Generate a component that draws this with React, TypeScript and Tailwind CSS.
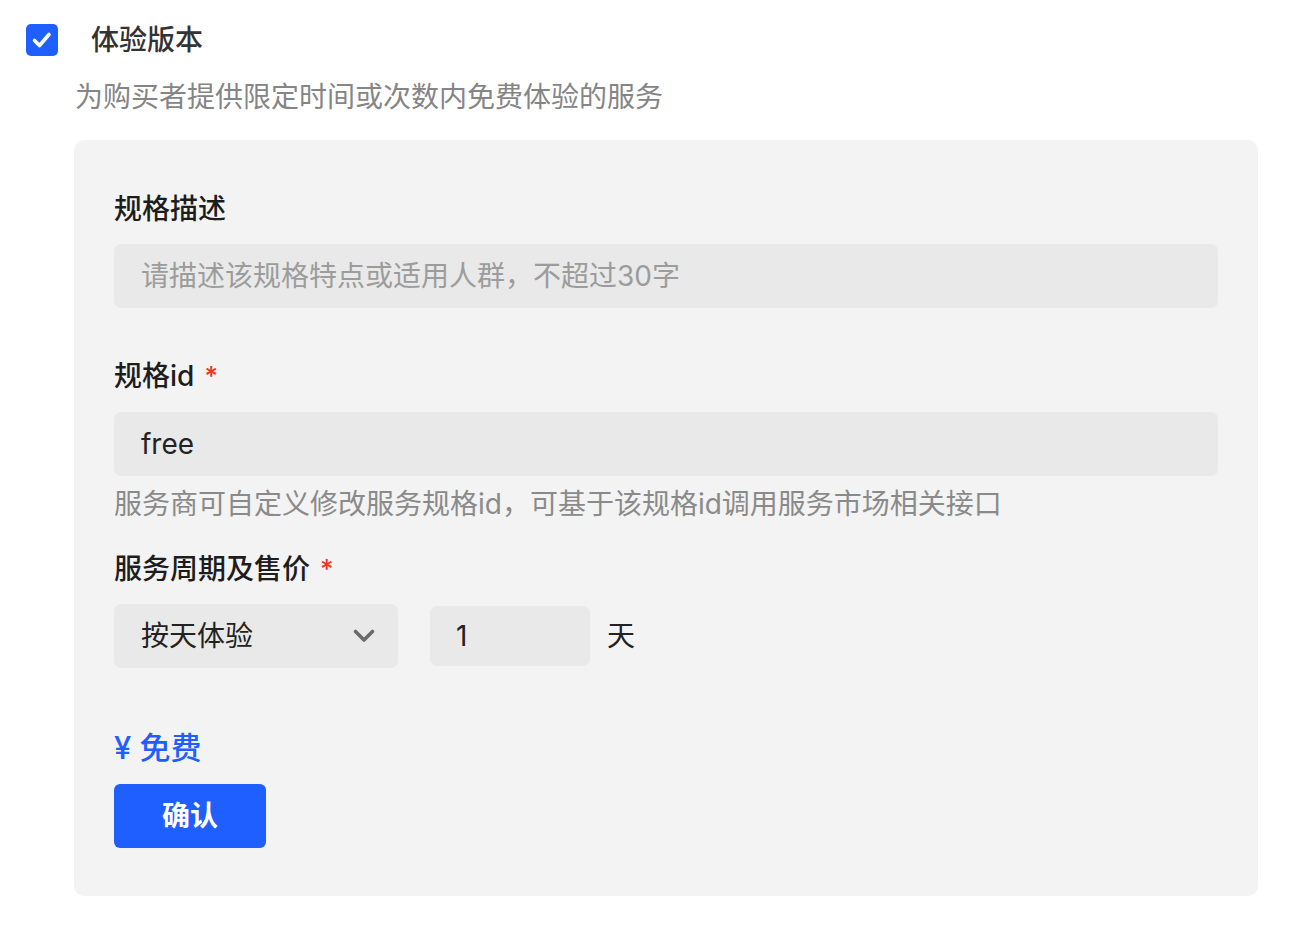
import React from "react";

export default function App() {
  const font = { fontFamily: 'Inter, "Noto Sans CJK SC", sans-serif' };
  return (
    <div className="w-[1298px] h-[930px] bg-white" style={font}>
      <div className="pt-6 pl-[26px] flex items-center h-[56px]">
        <div className="w-8 h-8 rounded-[5px] bg-[#1f5fff] flex items-center justify-center">
          <svg width="32" height="32" viewBox="0 0 32 32" fill="none">
            <path d="M8.5 16.5l5 5L23 10.5" stroke="white" strokeWidth="3.6" strokeLinecap="round" strokeLinejoin="round" />
          </svg>
        </div>
        <span className="ml-[33px] text-[28px] leading-[40px] font-medium text-[#333333]">体验版本</span>
      </div>
      <div className="pl-[75px] mt-[21px] text-[28px] leading-[40px] text-[#858585]">
        为购买者提供限定时间或次数内免费体验的服务
      </div>
      <div className="ml-[74px] mt-[23px] w-[1184px] h-[756px] bg-[#f3f3f3] rounded-[10px] px-10 pt-[49px]">
        <div className="text-[28px] leading-[40px] font-medium text-[#1d1d1d]">规格描述</div>
        <div className="mt-[15px] h-16 rounded-[7px] bg-[#e9e9e9] flex items-center pl-[27px] text-[28px] text-[#9c9c9c]">
          请描述该规格特点或适用人群，不超过30字
        </div>
        <div className="mt-12 text-[28px] leading-[40px] font-medium text-[#1d1d1d] flex items-center">
          规格id<span className="ml-[10px] text-[#f5311f] text-[26px]">*</span>
        </div>
        <div className="mt-4 h-16 rounded-[7px] bg-[#e9e9e9] flex items-center pl-[27px] text-[28px] text-[#222222]">
          free
        </div>
        <div className="mt-2 text-[28px] leading-[40px] text-[#8a8a8a]">
          服务商可自定义修改服务规格id，可基于该规格id调用服务市场相关接口
        </div>
        <div className="mt-[25px] text-[28px] leading-[40px] font-medium text-[#1d1d1d] flex items-center">
          服务周期及售价<span className="ml-[10px] text-[#f5311f] text-[26px]">*</span>
        </div>
        <div className="mt-[15px] flex items-center h-16">
          <div className="w-[284px] h-16 rounded-[7px] bg-[#e9e9e9] flex items-center justify-between pl-[27px] pr-[22px] text-[28px] text-[#222222]">
            <span>按天体验</span>
            <svg width="24" height="16" viewBox="0 0 24 16" fill="none">
              <path d="M3.5 3.5l8.5 8.5 8.5-8.5" stroke="#6b6b6b" strokeWidth="3.6" strokeLinecap="round" strokeLinejoin="round" />
            </svg>
          </div>
          <div className="ml-8 w-[160px] h-[60px] rounded-[7px] bg-[#e9e9e9] flex items-center pl-[26px] text-[28px] text-[#222222]">
            1
          </div>
          <span className="ml-[17px] text-[28px] text-[#222222]">天</span>
        </div>
        <div className="mt-[60px] text-[31px] leading-[40px] font-medium text-[#1f5fff]">
          ¥ 免费
        </div>
        <button className="mt-4 w-[152px] h-16 rounded-[6px] bg-[#1f5fff] text-white text-[28px] font-semibold flex items-center justify-center">
          确认
        </button>
      </div>
    </div>
  );
}
